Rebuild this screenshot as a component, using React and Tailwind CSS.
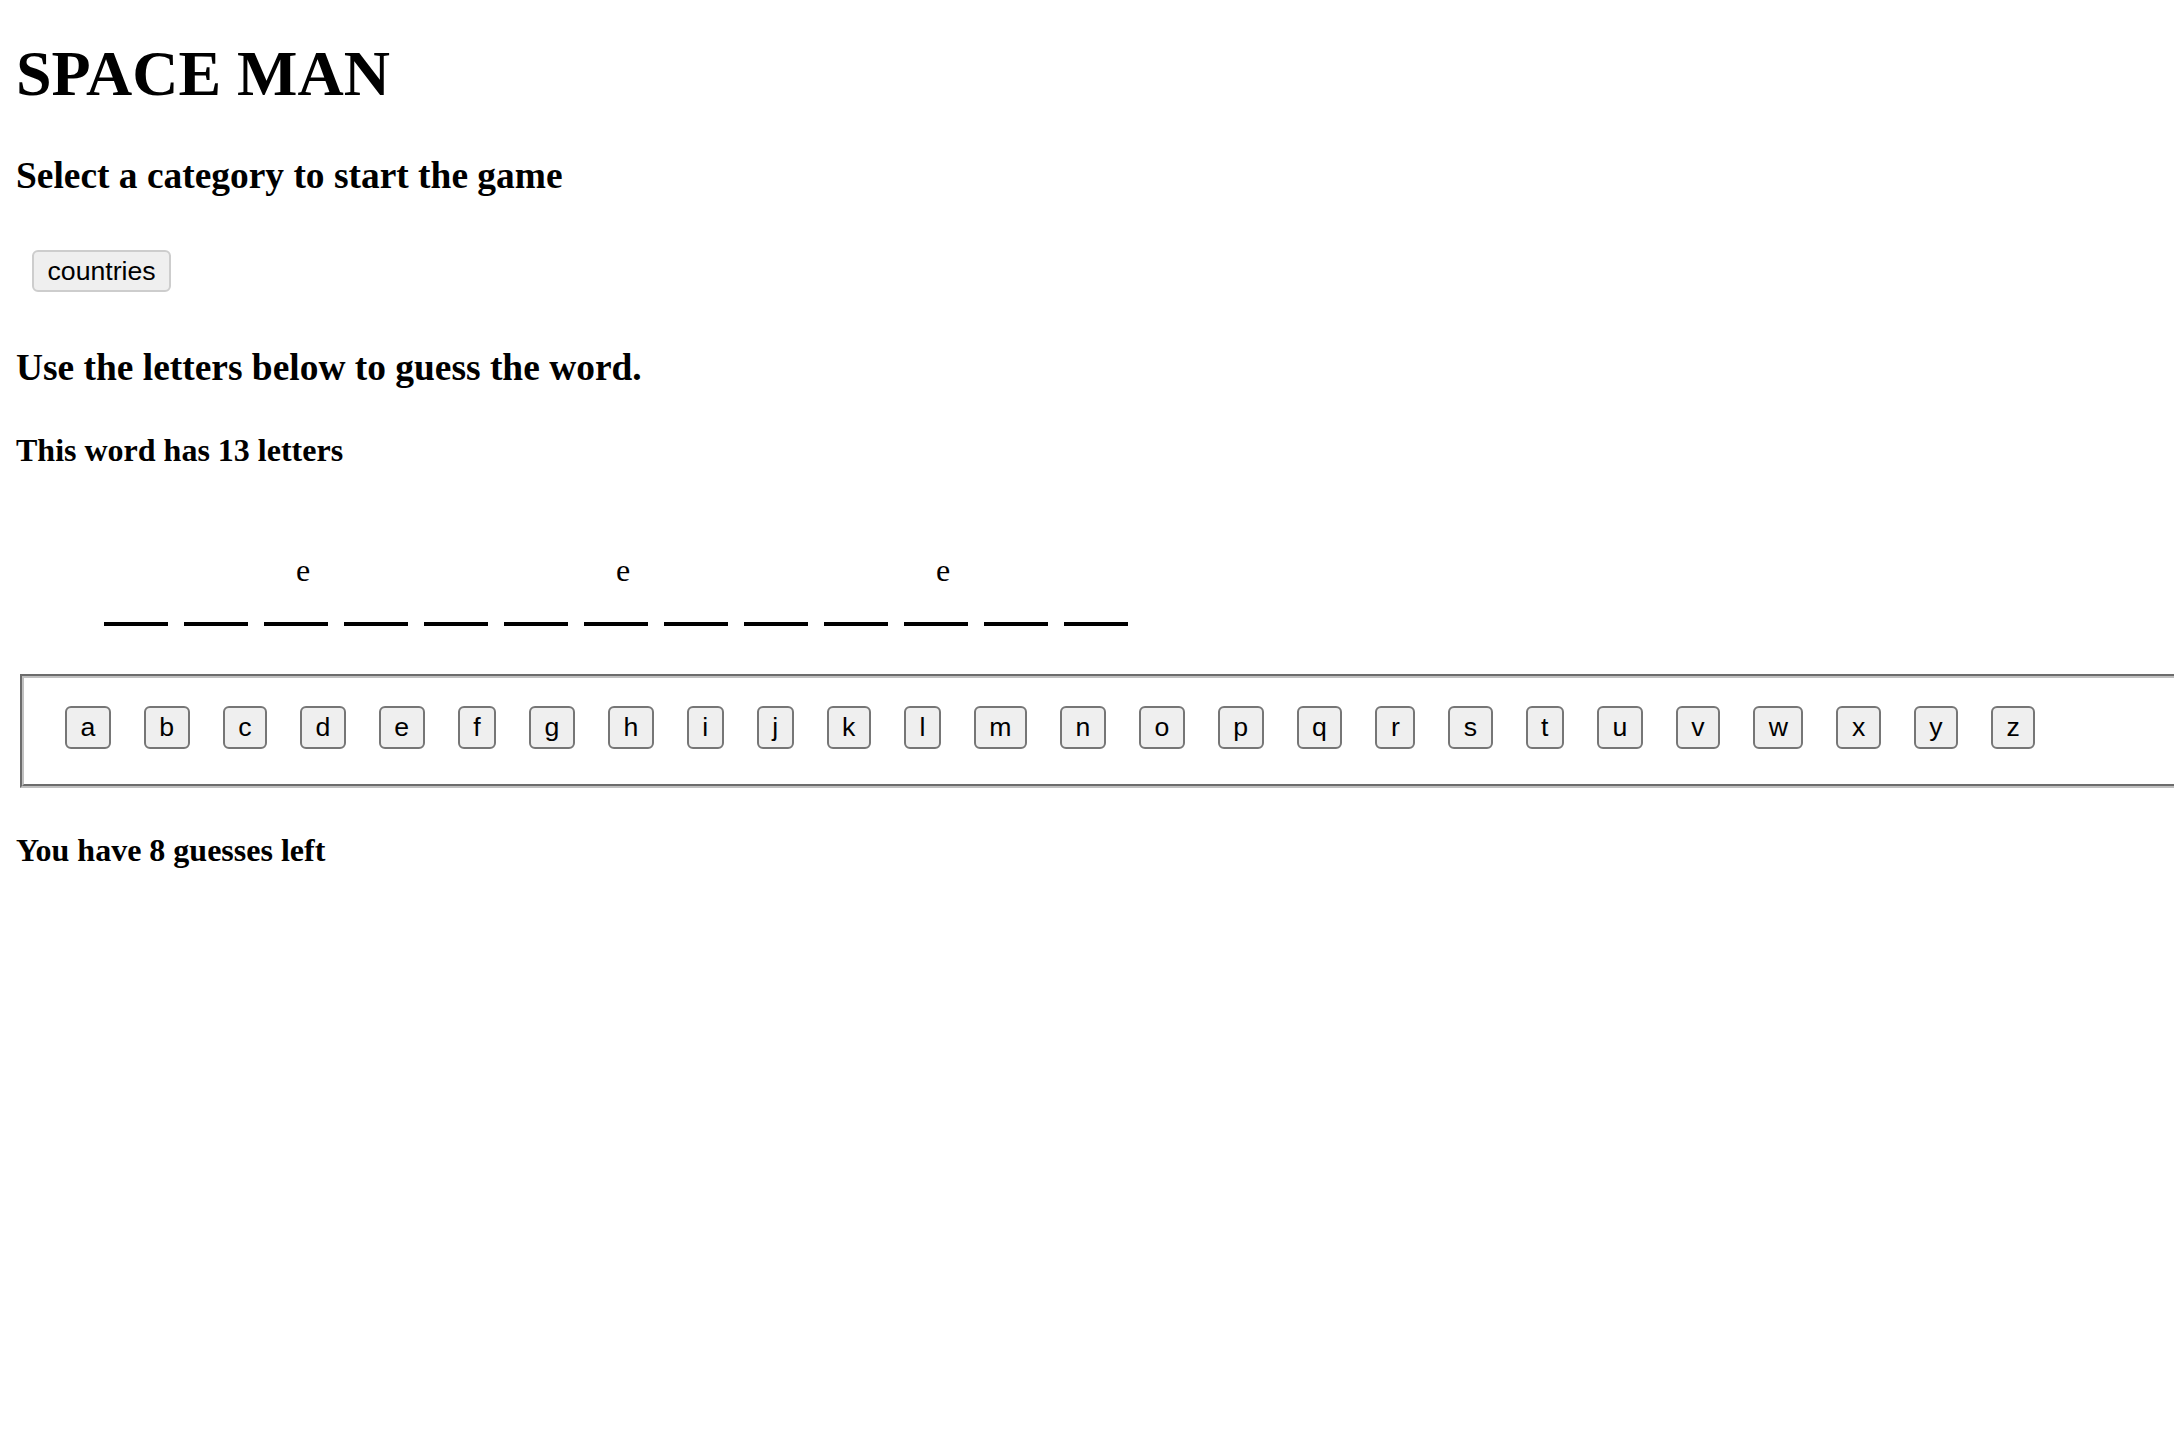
import React from 'react'

const ALPHABET = 'abcdefghijklmnopqrstuvwxyz'.split('')
const WORD = 'liechtenstein'
const GUESSED = ['e']
const SERIF = "font-['Liberation_Serif','Times_New_Roman',serif]"
const SANS = "font-['Liberation_Sans',Arial,sans-serif]"

function LetterSlot({ letter }) {
  const shown = GUESSED.includes(letter)
  return (
    <div className="w-[64px] border-b-4 border-black pb-[36px]">
      <span className={`block h-[32px] pl-[32px] text-[32px] leading-none text-black ${SERIF}`}>
        {shown ? letter : '\u00a0'}
      </span>
    </div>
  )
}

export default function App() {
  return (
    <div className="h-screen w-full overflow-hidden bg-white px-4 pt-[42px] text-black">
      <h1 className={`text-[64px] font-bold leading-none ${SERIF}`}>SPACE MAN</h1>

      <h3 className={`mt-[51px] text-[37.44px] font-bold leading-none ${SERIF}`}>
        Select a category to start the game
      </h3>

      <div className="mt-[56px]">
        <button
          className={`ml-4 h-[42px] rounded-[6px] border-2 border-[#cdcdcd] bg-[#efefef] px-[13.5px] text-[26.67px] leading-none text-black ${SANS}`}
        >
          countries
        </button>
      </div>

      <h3 className={`mt-[57px] text-[37.44px] font-bold leading-none ${SERIF}`}>
        Use the letters below to guess the word.
      </h3>

      <h4 className={`mt-[47px] text-[32px] font-bold leading-none ${SERIF}`}>
        This word has {WORD.length} letters
      </h4>

      <div className="ml-[88px] mt-[88px] flex gap-[16px]">
        {WORD.split('').map((l, i) => (
          <LetterSlot key={i} letter={l} />
        ))}
      </div>

      <fieldset className="ml-[4px] mt-[48px] w-[2300px] border-4 border-[#c0c0c0] pb-[35px] pl-[41px] pt-[28px] [border-style:groove]">
        <div className="flex gap-[33px]">
          {ALPHABET.map(l => (
            <button
              key={l}
              className={`h-[43px] rounded-[6px] border-2 border-[#767676] bg-[#efefef] px-[13.5px] text-[26.67px] leading-none text-black ${SANS}`}
            >
              {l}
            </button>
          ))}
        </div>
      </fieldset>

      <h4 className={`mt-[46px] text-[32px] font-bold leading-none ${SERIF}`}>
        You have 8 guesses left
      </h4>
    </div>
  )
}
